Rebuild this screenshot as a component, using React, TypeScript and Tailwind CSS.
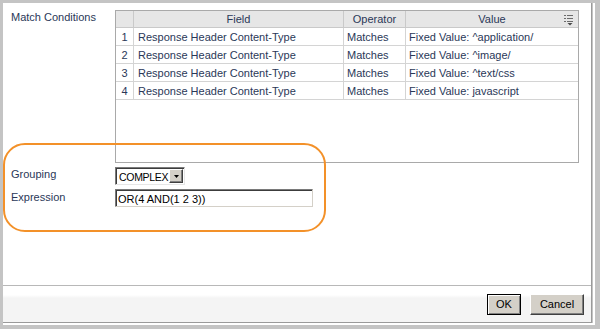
import React from 'react';

const rows = [
  { n: 1, field: 'Response Header Content-Type', op: 'Matches', value: 'Fixed Value: ^application/' },
  { n: 2, field: 'Response Header Content-Type', op: 'Matches', value: 'Fixed Value: ^image/' },
  { n: 3, field: 'Response Header Content-Type', op: 'Matches', value: 'Fixed Value: ^text/css' },
  { n: 4, field: 'Response Header Content-Type', op: 'Matches', value: 'Fixed Value: javascript' },
];

function ColumnMenuIcon() {
  return (
    <svg width="9" height="12" viewBox="0 0 9 12" className="block">
      <rect x="0" y="1" width="2" height="1" fill="#6b6b6b" />
      <rect x="3" y="1" width="6" height="1" fill="#6b6b6b" />
      <rect x="0" y="4" width="2" height="1" fill="#6b6b6b" />
      <rect x="3" y="4" width="6" height="1" fill="#6b6b6b" />
      <rect x="0" y="7" width="2" height="1" fill="#6b6b6b" />
      <rect x="3" y="7" width="6" height="1" fill="#6b6b6b" />
      <path d="M3.5 9 L8.5 9 L6 11.5 Z" fill="#4a4a4a" />
    </svg>
  );
}

export default function App() {
  return (
    <div className="relative w-[600px] h-[329px] overflow-hidden bg-[#c4c4c4] pl-[3px] pt-[3px] font-['Liberation_Sans',Arial,sans-serif] text-[11px] leading-[14px]">
      {/* Dialog frame */}
      <div className="w-[592px] h-[322px] border-r-2 border-b-2 border-white">
        <div className="w-[589px] h-[320px] flex flex-col border-r border-b border-[#9a9a9a]">
          {/* Main content */}
          <div className="h-[283px] bg-white border-b border-[#b8b8b8] pl-[8px] pt-[7px]">
            {/* Match conditions */}
            <div className="flex">
              <div className="w-[104px] text-[#2a3858]">Match Conditions</div>
              <div className="w-[464px] h-[153px] border border-[#a9a9a9] bg-white">
                <div className="grid grid-cols-[18px_210px_62px_1fr] text-[#2a3858]">
                  {/* Header */}
                  <div className="h-[17px] bg-[#e6e6e6] border-r border-b border-[#c9c9c9]" />
                  <div className="h-[17px] bg-[#e6e6e6] border-r border-b border-[#c9c9c9] flex items-center justify-center">Field</div>
                  <div className="h-[17px] bg-[#e6e6e6] border-r border-b border-[#c9c9c9] flex items-center justify-center">Operator</div>
                  <div className="relative h-[17px] bg-[#e6e6e6] border-b border-[#c9c9c9] flex items-center justify-center">
                    Value
                    <span className="absolute right-[5px] top-[3px]">
                      <ColumnMenuIcon />
                    </span>
                  </div>
                  {/* Rows */}
                  {rows.map((r) => (
                    <React.Fragment key={r.n}>
                      <div className="h-[18px] border-r border-b border-[#d4d4d4] flex items-center justify-center">{r.n}</div>
                      <div className="h-[18px] border-r border-b border-[#d4d4d4] flex items-center pl-[4px] whitespace-nowrap">{r.field}</div>
                      <div className="h-[18px] border-r border-b border-[#d4d4d4] flex items-center pl-[3px] whitespace-nowrap">{r.op}</div>
                      <div className="h-[18px] border-b border-[#d4d4d4] flex items-center pl-[3px] whitespace-nowrap">{r.value}</div>
                    </React.Fragment>
                  ))}
                </div>
              </div>
            </div>

            {/* Grouping */}
            <div className="flex mt-[4px]">
              <div className="w-[104px] text-[#2a3858]">Grouping</div>
              <div className="w-[70px] h-[18px] flex items-center bg-white border-t border-l border-[#7a7a7a] border-r border-b border-r-[#e6e6e6] border-b-[#e6e6e6] shadow-[inset_1px_1px_0_#3c3c3c]">
                <span className="flex-1 pl-[3px] pt-[1px] text-black text-[10.5px] tracking-[-0.3px] whitespace-nowrap">COMPLEX</span>
                <span className="w-[14px] h-[14px] mr-[1px] bg-[#d4d0c8] border-t border-l border-white border-r border-b border-r-[#404040] border-b-[#404040] shadow-[inset_-1px_-1px_0_#808080] flex items-center justify-center">
                  <svg width="5" height="3" viewBox="0 0 5 3" className="block">
                    <path d="M0 0 L5 0 L2.5 3 Z" fill="#000" />
                  </svg>
                </span>
              </div>
            </div>

            {/* Expression */}
            <div className="flex mt-[4px]">
              <div className="w-[104px] text-[#2a3858] pt-[1px]">Expression</div>
              <div className="w-[198px] h-[18px] flex items-center bg-white border-t border-l border-[#7a7a7a] border-r border-b border-r-[#d4d0c8] border-b-[#d4d0c8] shadow-[inset_1px_1px_0_#3c3c3c]">
                <span className="pl-[2px] pt-[1px] text-black whitespace-nowrap">OR(4 AND(1 2 3))</span>
              </div>
            </div>
          </div>

          {/* Footer */}
          <div className="flex-1 flex justify-end items-start gap-[9px] pr-[7px] pt-[8px] bg-[linear-gradient(to_bottom,#ffffff_0px,#ffffff_9px,#f4f4f4_12px,#f4f4f4_100%)]">
            <button className="w-[34px] h-[21px] border border-black bg-[#d4d0c8] shadow-[inset_1px_1px_0_#ffffff,inset_-1px_-1px_0_#808080] text-black text-[11px] leading-none">
              OK
            </button>
            <button className="w-[54px] h-[21px] bg-[#d4d0c8] border-t border-l border-white border-r border-b border-r-[#404040] border-b-[#404040] shadow-[inset_-1px_-1px_0_#808080] text-black text-[11px] leading-none">
              Cancel
            </button>
          </div>
        </div>
      </div>

      {/* Orange annotation */}
      <div className="absolute left-[3px] top-[143px] w-[323px] h-[89px] border-2 border-[#f39129] rounded-[22px] pointer-events-none" />
    </div>
  );
}
